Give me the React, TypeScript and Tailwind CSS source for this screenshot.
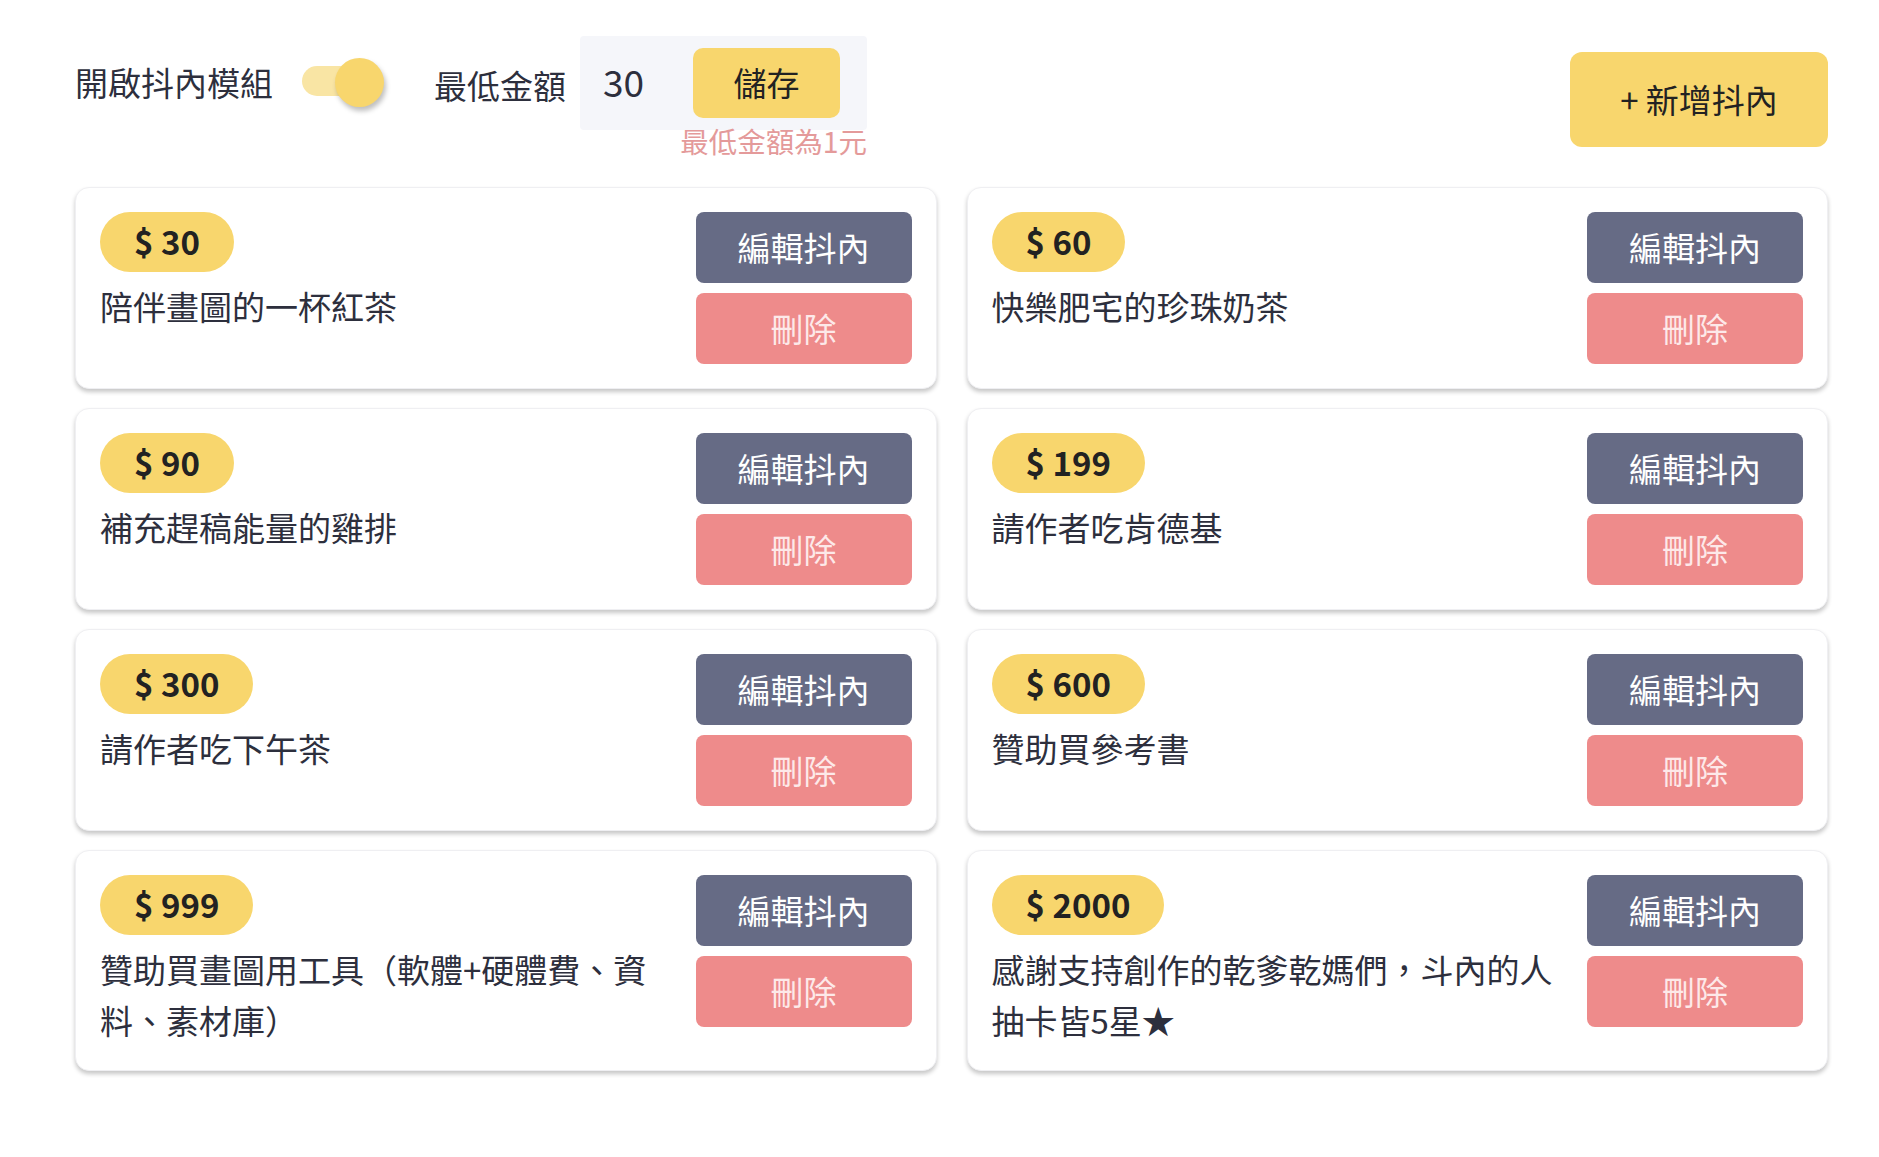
import { useState } from 'react'

const items = [
    { id: 1, price: 30, text: '陪伴畫圖的一杯紅茶' },
    { id: 2, price: 60, text: '快樂肥宅的珍珠奶茶' },
    { id: 3, price: 90, text: '補充趕稿能量的雞排' },
    { id: 4, price: 199, text: '請作者吃肯德基' },
    { id: 5, price: 300, text: '請作者吃下午茶' },
    { id: 6, price: 600, text: '贊助買參考書' },
    { id: 7, price: 999, text: '贊助買畫圖用工具（軟體+硬體費、資料、素材庫）' },
    { id: 8, price: 2000, text: '感謝支持創作的乾爹乾媽們，斗內的人抽卡皆5星★' },
]

function DonateCard({ price, text }: { price: number; text: string }) {
    return (
        <div className="bg-white rounded-[14px] border border-[#efeff2] shadow-[0_3px_4px_rgba(0,0,0,0.22)] px-[24px] py-[24px] flex gap-[20px]">
            <div className="flex-1 min-w-0">
                <div className="inline-flex items-center h-[60px] px-[34px] rounded-full bg-[#f8d66d] text-[33px] font-bold text-[#222]">
                    $ {price}
                </div>
                <div className="mt-[9px] text-[33px] leading-[51px] text-[#2d2f3d]">{text}</div>
            </div>
            <div className="flex flex-col gap-[10px] w-[216px] shrink-0">
                <button className="h-[71px] rounded-[8px] bg-[#666b85] text-white text-[33px]">編輯抖內</button>
                <button className="h-[71px] rounded-[8px] bg-[#ee8b8b] text-[#fde9e9] text-[33px]">刪除</button>
            </div>
        </div>
    )
}

export default function App() {
    const [on, setOn] = useState(true)
    const [min, setMin] = useState('30')

    return (
        <div className="min-h-[1157px] bg-white text-[#2d2f3d]" style={{ fontFamily: '"Noto Sans CJK TC", "Noto Sans", sans-serif' }}>
            <div className="ml-[75px] w-[1759px] pt-[36px]">
                <div className="flex items-start justify-between">
                    <div className="flex items-start">
                        <div className="flex items-center h-[94px]">
                            <span className="text-[33px]">開啟抖內模組</span>
                            <button
                                className="relative ml-[29px] w-[82px] h-[50px] flex items-center"
                                onClick={() => setOn(v => !v)}
                            >
                                <span className="absolute left-0 top-[8px] w-[72px] h-[30px] rounded-full bg-[#f9e5a4]" />
                                <span className={`absolute top-0 w-[49px] h-[49px] rounded-full bg-[#f8d66d] shadow-[2px_4px_5px_rgba(0,0,0,0.25)] ${on ? 'left-[33px]' : 'left-0'}`} />
                            </button>
                            <span className="ml-[50px] text-[33px] mt-[6px]">最低金額</span>
                        </div>
                        <div className="ml-[14px] flex flex-col items-end">
                            <div className="flex items-center w-[287px] h-[94px] bg-[#f5f6fa] rounded-[4px] pl-[23px] pr-[27px]">
                                <input
                                    className="w-[90px] bg-transparent outline-none text-[37px] text-[#2d2f3d] -mt-[3px]"
                                    value={min}
                                    onChange={e => setMin(e.target.value)}
                                />
                                <button className="ml-auto w-[148px] h-[70px] rounded-[10px] bg-[#f8d66d] text-[33px] text-[#222]">儲存</button>
                            </div>
                            <div className="-mt-[4px] text-[28.5px] leading-[30px] text-[#e49a9a]">最低金額為1元</div>
                        </div>
                    </div>
                    <button className="mt-[16px] mr-[6px] w-[258px] h-[95px] rounded-[12px] bg-[#f8d66d] text-[33px] text-[#222]">+ 新增抖內</button>
                </div>

                <div className="mt-[31px] grid grid-cols-2 gap-x-[30px] gap-y-[19px] w-[1753px]">
                    {items.map(it => (
                        <DonateCard key={it.id} price={it.price} text={it.text} />
                    ))}
                </div>
            </div>
        </div>
    )
}
